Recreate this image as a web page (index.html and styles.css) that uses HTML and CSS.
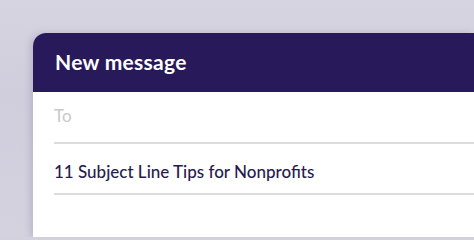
FILE: index.html
```html
<!DOCTYPE html>
<html>
<head>
<meta charset="utf-8">
<link rel="stylesheet" href="styles.css">
</head>
<body>
<div class="stage">
  <div class="card">
    <div class="card-header">New message</div>
    <div class="card-body">
      <div class="field field-to">To</div>
      <div class="field field-subject">11 Subject Line Tips for Nonprofits</div>
    </div>
  </div>
</div>
</body>
</html>
```

FILE: styles.css
```css
html, body {
  margin: 0;
  padding: 0;
}
body {
  width: 474px;
  height: 237px;
  overflow: hidden;
  background: #d3d1de;
  font-family: "Lato", "Open Sans", sans-serif;
}
.stage {
  height: 237px;
  padding: 33px 0 0 33px;
  box-sizing: border-box;
  background: linear-gradient(180deg, #d6d4e0 0%, #d0cedc 40%, #d4d2df 100%);
}
.card {
  height: 100%;
  border-top-left-radius: 13px;
  overflow: hidden;
  background: #ffffff;
  box-shadow: -3px 0 6px rgba(120, 110, 150, 0.25);
}
.card-header {
  height: 59px;
  box-sizing: border-box;
  background: #27195a;
  color: #ffffff;
  font-size: 21px;
  font-weight: 700;
  letter-spacing: 0.3px;
  padding: 0 0 2px 22px;
  display: flex;
  align-items: center;
}
.card-body {
  padding: 0 0 0 21px;
}
.field {
  box-sizing: border-box;
  border-bottom: 2px solid #dcdcdc;
  display: flex;
  align-items: center;
}
.field-to {
  height: 52px;
  font-size: 17px;
  color: #c9c9c9;
  padding-bottom: 3px;
}
.field-subject {
  height: 51px;
  font-size: 17px;
  color: #261c4e;
  font-weight: 500;
  padding-top: 6px;
}
```
